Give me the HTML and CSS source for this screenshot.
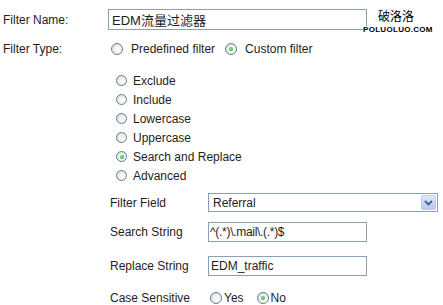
FILE: index.html
```html
<!DOCTYPE html>
<html lang="zh-CN">
<head>
    <meta charset="UTF-8">
    <title>Filter</title>
    <link rel="stylesheet" href="styles.css">
</head>
<body>
    <!-- 基本信息 -->
    <div class="form">
        <div class="row row-name">
            <span class="label">Filter Name:</span>
            <input class="text name-input" type="text" value="EDM流量过滤器">
        </div>

        <div class="row row-type">
            <span class="label">Filter Type:</span>
            <span class="radio first"><i class="dot"></i>Predefined filter</span>
            <span class="radio"><i class="dot on"></i>Custom filter</span>
        </div>

        <!-- 自定义过滤类型 -->
        <div class="choices">
            <span class="radio"><i class="dot"></i>Exclude</span>
            <span class="radio"><i class="dot"></i>Include</span>
            <span class="radio"><i class="dot"></i>Lowercase</span>
            <span class="radio"><i class="dot"></i>Uppercase</span>
            <span class="radio"><i class="dot on"></i>Search and Replace</span>
            <span class="radio"><i class="dot"></i>Advanced</span>
        </div>

        <!-- 查找替换设置 -->
        <div class="details">
            <div class="field field-select">
                <span class="sub-label">Filter Field</span>
                <div class="select">
                    <span class="select-value">Referral</span>
                    <span class="select-btn">
                        <svg width="9" height="6" viewBox="0 0 9 6"><path d="M1 1 L4.5 4.5 L8 1" fill="none" stroke="#4a5f8c" stroke-width="1.8"/></svg>
                    </span>
                </div>
            </div>
            <div class="field field-search">
                <span class="sub-label">Search String</span>
                <input class="text short-input tight" type="text" value="^(.*)\.mail\.(.*)$">
            </div>
            <div class="field field-replace">
                <span class="sub-label">Replace String</span>
                <input class="text short-input" type="text" value="EDM_traffic">
            </div>
            <div class="field field-case">
                <span class="sub-label">Case Sensitive</span>
                <span class="radio first"><i class="dot"></i>Yes</span>
                <span class="radio"><i class="dot on"></i>No</span>
            </div>
        </div>
    </div>

    <!-- 水印 -->
    <div class="mark">
        <span class="mark-cn">破洛洛</span>
        <span class="mark-en">POLUOLUO.COM</span>
    </div>
</body>
</html>
```

FILE: styles.css
```css
/* 基础样式 */
* {
    box-sizing: border-box;
    margin: 0;
    padding: 0;
}

body {
    position: relative;
    width: 443px;
    height: 305px;
    background: #fff;
    color: #1e1e1e;
    font-family: "Liberation Sans", "Noto Sans CJK SC", Arial, sans-serif;
    font-size: 12px;
    overflow: hidden;
}

.row {
    display: flex;
    align-items: center;
}

.label {
    width: 108px;
    padding-left: 3px;
}

/* 输入框 */
.text {
    font-family: "Liberation Sans", "Noto Sans CJK SC", Arial, sans-serif;
    font-size: 12px;
    color: #1e1e1e;
    border: 1px solid #8aa0b6;
    background: #fff;
    padding: 0 3px;
    outline: none;
}

.name-input {
    width: 259px;
    height: 21px;
    font-size: 13px;
}

.row-name {
    margin-top: 9px;
    height: 21px;
}

.row-type {
    margin-top: 9px;
    height: 19px;
}

/* 单选按钮 */
.radio {
    display: flex;
    align-items: center;
    height: 19px;
}

.dot {
    position: relative;
    width: 12px;
    height: 12px;
    border-radius: 50%;
    border: 1px solid #5f7d9e;
    background: radial-gradient(circle at 65% 65%, #ffffff 0%, #f2f2ee 40%, #d4d4cc 100%);
    margin-right: 8px;
}

.dot.on::after {
    content: "";
    position: absolute;
    left: 3px;
    top: 3px;
    width: 4px;
    height: 4px;
    border-radius: 50%;
    background: radial-gradient(circle at 40% 40%, #8be08b, #24a024);
}

.row-type .first {
    margin-left: 3px;
    margin-right: 10px;
}

.choices {
    display: flex;
    flex-direction: column;
    margin-top: 13px;
    padding-left: 116px;
}

.choices .dot {
    width: 11px;
    height: 11px;
    margin-right: 6px;
}

.choices .dot.on::after {
    left: 2.5px;
    top: 2.5px;
}

/* 详细设置 */
.details {
    padding-left: 110px;
}

.field {
    display: flex;
    align-items: center;
}

.sub-label {
    width: 98px;
}

.field-select {
    margin-top: 8px;
    height: 19px;
}

.select {
    display: flex;
    align-items: center;
    width: 230px;
    height: 19px;
    border: 1px solid #8aa0b6;
    padding-left: 4px;
}

.select-value {
    flex: 1;
}

.select-btn {
    display: flex;
    align-items: center;
    justify-content: center;
    width: 15px;
    height: 15px;
    margin-right: 1px;
    border: 1px solid #b9ccf0;
    border-radius: 2px;
    background: linear-gradient(#dfe8fd, #b7c9f5);
}

.short-input {
    width: 159px;
    height: 20px;
    padding: 0 2px;
}

.tight {
    padding: 0 1px;
    letter-spacing: -0.3px;
}

.field-search {
    margin-top: 10px;
    height: 20px;
}

.field-replace {
    margin-top: 14px;
    height: 20px;
}

.field-case {
    margin-top: 12px;
    height: 19px;
}

.field-case .dot {
    margin-right: 2px;
}

.field-case .first {
    margin-left: 2px;
    margin-right: 13px;
}

/* 水印 */
.mark {
    position: absolute;
    left: 363px;
    top: 8px;
    display: flex;
    flex-direction: column;
    align-items: flex-start;
}

.mark-cn {
    font-family: "Noto Sans CJK SC", sans-serif;
    font-size: 12px;
    line-height: 16px;
    color: #000;
    margin-left: 15px;
}

.mark-en {
    font-family: "Liberation Sans", Arial, sans-serif;
    font-weight: bold;
    font-size: 8px;
    line-height: 8px;
    letter-spacing: 0.3px;
    color: #000;
    margin-top: 2px;
    background: #fff;
}
```
